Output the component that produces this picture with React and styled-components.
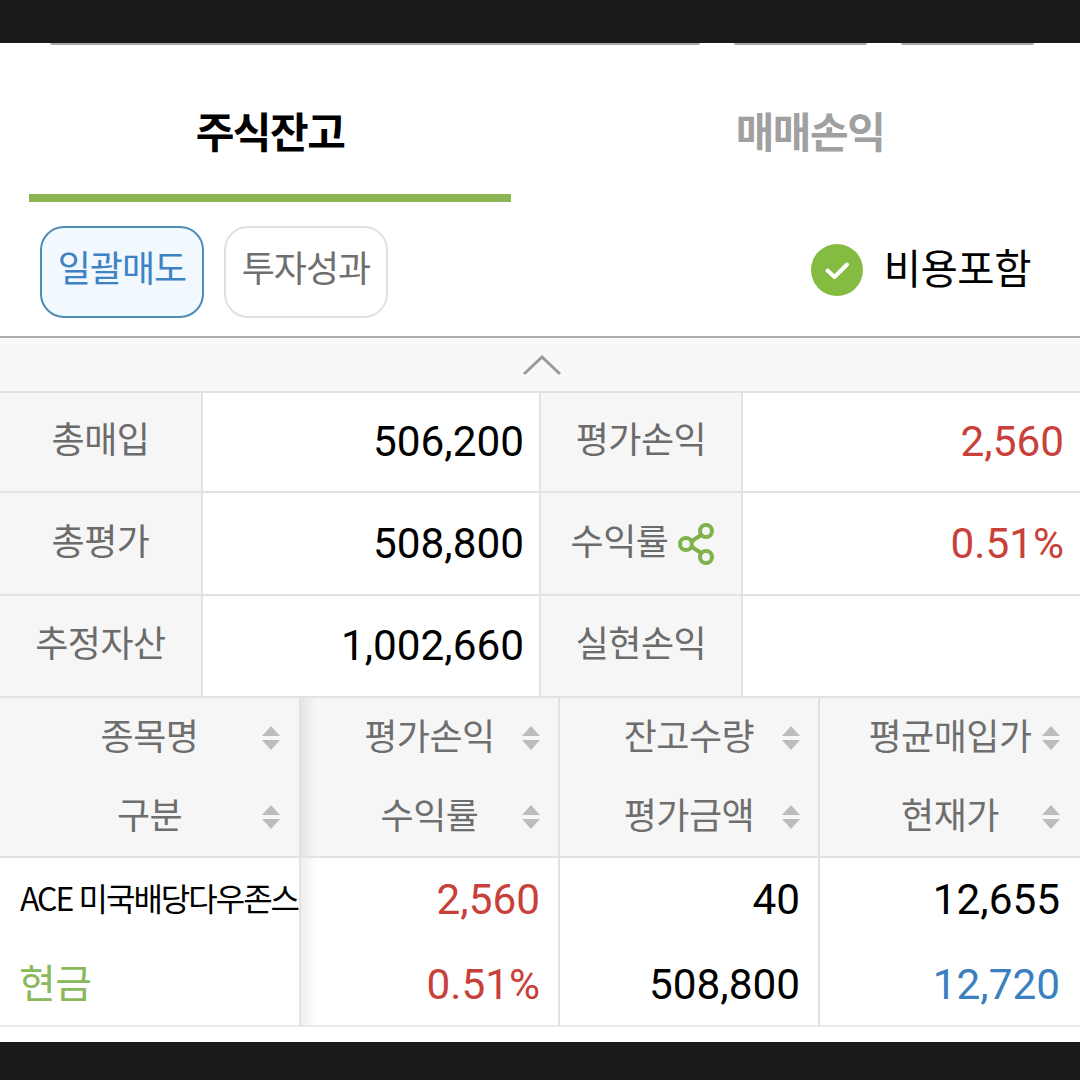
import React from 'react';
import styled, { createGlobalStyle, css } from 'styled-components';

const GlobalStyle = createGlobalStyle`
  html, body {
    margin: 0;
    padding: 0;
    background: #fff;
  }
  * {
    box-sizing: border-box;
  }
`;

const KR = `"Noto Sans CJK KR", "Noto Sans", sans-serif`;
const NUM = `Roboto, "Noto Sans CJK KR", sans-serif`;

const Page = styled.div`
  width: 1080px;
  height: 1080px;
  overflow: hidden;
  background: #fff;
  font-family: ${KR};
  display: flex;
  flex-direction: column;
`;

const BlackBar = styled.div`
  height: ${p => p.$h}px;
  flex: none;
  background: #1a1a1a;
`;

const CutOffRow = styled.div`
  height: 3px;
  flex: none;
  display: flex;
  padding-left: 50px;
  gap: 34px;
`;

const CutOffField = styled.div`
  width: ${p => p.$w}px;
  height: 2px;
  background: #aaa;
  border-radius: 0 0 6px 6px;
`;

const Tabs = styled.div`
  height: 157px;
  flex: none;
  display: grid;
  grid-template-columns: 540px 540px;
`;

const Tab = styled.div`
  height: 156px;
  display: flex;
  align-items: center;
  justify-content: center;
  padding-top: 19px;
  margin: 0 ${p => (p.$active ? '29px' : '0')};
  border-bottom: 8px solid ${p => (p.$active ? '#8ab552' : 'transparent')};
  font-size: 42px;
  font-weight: 700;
  letter-spacing: -1.5px;
  color: ${p => (p.$active ? '#000' : '#a0a0a0')};
`;

const ActionRow = styled.div`
  height: 133px;
  flex: none;
  display: flex;
  align-items: center;
  padding: 5px 49px 0 40px;
  gap: 20px;
`;

const ActionButton = styled.div`
  width: 164px;
  height: 92px;
  display: flex;
  align-items: center;
  justify-content: center;
  padding-bottom: 12px;
  border-radius: 24px;
  border: 2px solid ${p => (p.$primary ? '#4f8cb5' : '#e0e0e0')};
  background: ${p => (p.$primary ? '#f1f8fe' : '#fff')};
  color: ${p => (p.$primary ? '#3e82c4' : '#6f6f6f')};
  font-size: 36px;
  letter-spacing: -1px;
`;

const CostToggle = styled.div`
  margin: 0 0 4px auto;
  display: flex;
  align-items: center;
  gap: 21px;
  font-size: 40.6px;
  letter-spacing: -0.5px;
  color: #000;
`;

const CostLabel = styled.span`
  padding-bottom: 8px;
`;

const CollapseBar = styled.div`
  height: 57px;
  flex: none;
  display: flex;
  align-items: center;
  justify-content: center;
  padding-left: 4px;
  background: #f8f8f8;
  border-top: 2px solid #adadad;
  border-bottom: 2px solid #e2e2e2;
`;

const SummaryGrid = styled.div`
  flex: none;
  display: grid;
  grid-template-columns: 203px 338px 202px 337px;
  grid-template-rows: 100px 103px 102px;
`;

const SummaryLabel = styled.div`
  display: flex;
  align-items: center;
  justify-content: center;
  gap: 9px;
  padding: 0 0 10px ${p => p.$shift || 0}px;
  background: #f6f6f6;
  border-right: 2px solid #e2e2e2;
  border-bottom: 2px solid #e2e2e2;
  color: #6b6b6b;
  font-size: 36px;
  letter-spacing: -0.5px;
`;

const SummaryIcon = styled.span`
  display: flex;
  margin-top: 10px;
`;

const SummaryValue = styled.div`
  display: flex;
  align-items: center;
  justify-content: flex-end;
  padding: 0 ${p => (p.$last ? 16 : 15)}px 1px 0;
  background: #fff;
  border-right: ${p => (p.$last ? '0' : '2px solid #e2e2e2')};
  border-bottom: 2px solid #e2e2e2;
  color: ${p => (p.$red ? '#c9403a' : '#000')};
  font-family: ${NUM};
  font-size: 42.3px;
`;

const HoldingsGrid = styled.div`
  flex: none;
  display: grid;
  grid-template-columns: 301px 259px 260px 260px;
`;

const frozenEdge = css`
  &::after {
    content: '';
    position: absolute;
    top: 0;
    bottom: 0;
    left: 100%;
    margin-left: 2px;
    width: 16px;
    background: linear-gradient(to right, rgba(0, 0, 0, 0.07), rgba(0, 0, 0, 0));
    z-index: 1;
  }
`;

const HeadCell = styled.div`
  position: relative;
  height: 160px;
  display: flex;
  flex-direction: column;
  background: #f6f6f6;
  border-right: ${p => (p.$last ? '0' : '2px solid #e2e2e2')};
  border-bottom: 2px solid #e2e2e2;
  ${p => p.$frozen && frozenEdge}
`;

const HeadLine = styled.div`
  position: relative;
  height: 79px;
  display: flex;
  align-items: center;
  justify-content: center;
  padding-bottom: 8px;
  color: #6e6e6e;
  font-size: 36px;
  letter-spacing: -0.5px;
  white-space: nowrap;
`;

const SortMark = styled.span`
  position: absolute;
  top: 27px;
  right: ${p => p.$right}px;
  display: flex;
`;

const BodyCell = styled.div`
  position: relative;
  height: 169px;
  display: flex;
  flex-direction: column;
  border-right: ${p => (p.$last ? '0' : '2px solid #e2e2e2')};
  border-bottom: 2px solid #e9e9e9;
  ${p => p.$frozen && frozenEdge}
`;

const BodyLine = styled.div`
  height: 84px;
  flex: none;
  display: flex;
  align-items: center;
  justify-content: flex-end;
  padding: 0 ${p => p.$pad || 18}px ${p => (p.$first ? 2 : 0)}px 0;
  font-family: ${NUM};
  font-size: 42.3px;
  color: ${p => p.$color || '#000'};
`;

const StockName = styled.div`
  height: 84px;
  flex: none;
  display: flex;
  align-items: center;
  padding: 0 0 6px 20px;
  font-size: 32px;
  letter-spacing: -2px;
  word-spacing: 1px;
  color: #000;
  white-space: nowrap;
  overflow: hidden;
`;

const StockKind = styled.div`
  height: 84px;
  flex: none;
  display: flex;
  align-items: center;
  padding: 0 0 6px 19px;
  font-size: 40px;
  letter-spacing: -0.5px;
  color: #8ab95c;
`;

const Spacer = styled.div`
  flex: 1;
`;

const CheckIcon = () => (
  <svg width="52" height="52" viewBox="0 0 52 52">
    <circle cx="26" cy="26" r="26" fill="#84bc41" />
    <path d="M16.5 26.5 L23.5 33 L36 20.5" fill="none" stroke="#fff" strokeWidth="4" strokeLinecap="round" strokeLinejoin="round" />
  </svg>
);

const ChevronUp = () => (
  <svg width="40" height="22" viewBox="0 0 40 22">
    <path d="M2 20 L20 3 L38 20" fill="none" stroke="#9a9a9a" strokeWidth="3" />
  </svg>
);

const ShareIcon = () => (
  <svg width="38" height="44" viewBox="0 0 38 44">
    <path d="M10 22 L29 10 M10 22 L29 34" stroke="#7fb24c" strokeWidth="4" />
    <circle cx="9" cy="22" r="6" fill="#f6f6f6" stroke="#7fb24c" strokeWidth="4" />
    <circle cx="29" cy="9" r="6" fill="#f6f6f6" stroke="#7fb24c" strokeWidth="4" />
    <circle cx="29" cy="35" r="6" fill="#f6f6f6" stroke="#7fb24c" strokeWidth="4" />
  </svg>
);

const SortIcon = () => (
  <svg width="18" height="26" viewBox="0 0 18 26">
    <path d="M9 1 L18 11 H0 Z" fill="#bcbcbc" />
    <path d="M0 15 H18 L9 25 Z" fill="#bcbcbc" />
  </svg>
);

const headers = [
  { top: '종목명', bottom: '구분', right: 19, frozen: true },
  { top: '평가손익', bottom: '수익률', right: 18 },
  { top: '잔고수량', bottom: '평가금액', right: 18 },
  { top: '평균매입가', bottom: '현재가', right: 20, last: true },
];

const App = () => {
  return (
    <Page>
      <GlobalStyle />
      <BlackBar $h={43} />
      <CutOffRow>
        <CutOffField $w={650} />
        <CutOffField $w={133} />
        <CutOffField $w={133} />
      </CutOffRow>
      <Tabs>
        <Tab $active>주식잔고</Tab>
        <Tab>매매손익</Tab>
      </Tabs>
      <ActionRow>
        <ActionButton $primary>일괄매도</ActionButton>
        <ActionButton>투자성과</ActionButton>
        <CostToggle>
          <CheckIcon />
          <CostLabel>비용포함</CostLabel>
        </CostToggle>
      </ActionRow>
      <CollapseBar>
        <ChevronUp />
      </CollapseBar>
      <SummaryGrid>
        <SummaryLabel>총매입</SummaryLabel>
        <SummaryValue>506,200</SummaryValue>
        <SummaryLabel>평가손익</SummaryLabel>
        <SummaryValue $red $last>2,560</SummaryValue>
        <SummaryLabel>총평가</SummaryLabel>
        <SummaryValue>508,800</SummaryValue>
        <SummaryLabel $shift={4}>
          수익률
          <SummaryIcon>
            <ShareIcon />
          </SummaryIcon>
        </SummaryLabel>
        <SummaryValue $red $last>0.51%</SummaryValue>
        <SummaryLabel>추정자산</SummaryLabel>
        <SummaryValue>1,002,660</SummaryValue>
        <SummaryLabel>실현손익</SummaryLabel>
        <SummaryValue $last />
      </SummaryGrid>
      <HoldingsGrid>
        {headers.map(h => (
          <HeadCell key={h.top} $frozen={h.frozen} $last={h.last}>
            <HeadLine>
              {h.top}
              <SortMark $right={h.right}>
                <SortIcon />
              </SortMark>
            </HeadLine>
            <HeadLine>
              {h.bottom}
              <SortMark $right={h.right}>
                <SortIcon />
              </SortMark>
            </HeadLine>
          </HeadCell>
        ))}
        <BodyCell $frozen>
          <StockName>ACE 미국배당다우존스</StockName>
          <StockKind>현금</StockKind>
        </BodyCell>
        <BodyCell>
          <BodyLine $first $color="#c9403a">2,560</BodyLine>
          <BodyLine $color="#c9403a">0.51%</BodyLine>
        </BodyCell>
        <BodyCell>
          <BodyLine $first>40</BodyLine>
          <BodyLine>508,800</BodyLine>
        </BodyCell>
        <BodyCell $last>
          <BodyLine $first $pad={20}>12,655</BodyLine>
          <BodyLine $pad={20} $color="#3a80c0">12,720</BodyLine>
        </BodyCell>
      </HoldingsGrid>
      <Spacer />
      <BlackBar $h={38} />
    </Page>
  );
};

export default App;
